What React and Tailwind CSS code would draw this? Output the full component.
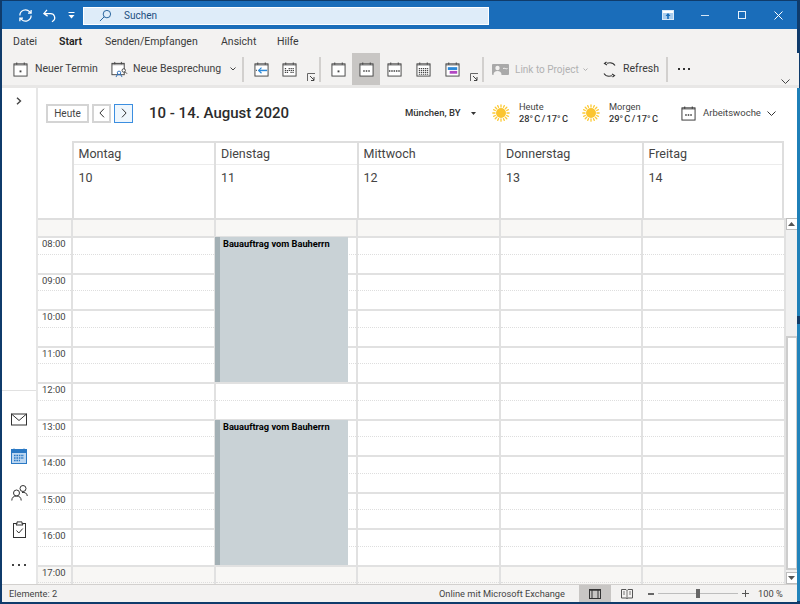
import React from "react";

const FONT = { fontFamily: 'Roboto,"Noto Sans",sans-serif' };

function Cal({ v = "dot", size = 15, color = "#444" }) {
  return (
    <svg width={size} height={size} viewBox="0 0 16 16" fill="none" className="shrink-0">
      <rect x="1" y="2" width="14" height="13" fill="#fff" stroke={color} strokeWidth="1" />
      <rect x="1" y="2" width="14" height="2" fill={color} fillOpacity="0.45" />
      <path d="M4 .5V3M12 .5V3" stroke={color} strokeWidth="1" />
      {v === "dot" && <rect x="7" y="9" width="2" height="2" fill={color} />}
      {v === "three" && <path d="M4.500 9.500h7" stroke={color} strokeWidth="1.600" strokeDasharray="1.600 1.100" />}
      {v === "five" && <path d="M2 9.500h12" stroke={color} strokeWidth="1.600" strokeDasharray="1.600 .9" />}
      {v === "month" && <path d="M3 7h10M3 9h10M3 11h10M3 13h10" stroke={color} strokeWidth="1.200" strokeDasharray="1.400 .8" />}
      {v === "back" && (
        <>
          <path d="M5 9h9" stroke="#2b88d8" strokeWidth="1.600" />
          <path d="M8 6 5 9l3 3" stroke="#2b88d8" strokeWidth="1.300" />
          <path d="M2 9h1" stroke={color} strokeWidth="1.400" />
        </>
      )}
      {v === "week" && (
        <>
          <path d="M3 7h2M7 7h6M3 9h10M3 11h4" stroke={color} strokeWidth="1.200" strokeDasharray="1.400 .7" />
          <path d="M9 11h4" stroke={color} strokeWidth="1.200" strokeDasharray="1.400 .7" />
        </>
      )}
      {v === "color" && (
        <>
          <rect x="3" y="5.500" width="10" height="3" fill="#2b88d8" />
          <rect x="5" y="9.500" width="8" height="3" fill="#b146c2" />
        </>
      )}
    </svg>
  );
}

function Launcher() {
  return (
    <svg width="9" height="9" viewBox="0 0 9 9" fill="none" className="shrink-0">
      <path d="M.5 8V.5H8" stroke="#666" />
      <path d="M3 3l4 4M7 4v3.500H4" stroke="#444" />
    </svg>
  );
}

function Sep() {
  return <div className="w-[2px] h-[25px] bg-[#d2d0ce] shrink-0" />;
}

function Sun() {
  return (
    <svg width="18" height="18" viewBox="0 0 18 18" className="shrink-0">
      <circle cx="9" cy="9" r="5" fill="#fbc531" />
      <g stroke="#fcc934" strokeWidth="1.300" strokeLinecap="round">
        <path d="M9 .8v2.200M9 15v2.200M.8 9H3M15 9h2.200M3.200 3.200l1.500 1.500M13.300 13.300l1.500 1.500M14.800 3.200l-1.500 1.500M4.700 13.300l-1.500 1.500" />
        <path d="M5.700 1.600l.8 1.700M11.500 14.700l.8 1.700M12.300 1.600l-.8 1.700M6.500 14.700l-.8 1.700M1.600 5.700l1.700.8M14.700 11.500l1.700.8M16.400 5.700l-1.700.8M3.300 11.500l-1.700.8" />
      </g>
    </svg>
  );
}

const hours = ["08:00", "09:00", "10:00", "11:00", "12:00", "13:00", "14:00", "15:00", "16:00", "17:00"];
const GRID = "grid grid-cols-[35px_repeat(5,142.5px)]";

function Event({ top }) {
  return (
    <div className={`absolute left-[177px] w-[133px] h-[145px] bg-[#c9d2d6] flex ${top}`}>
      <div className="w-[5px] bg-[#a3b0b5]" />
      <div className="pl-[3px] pt-[1px] text-[9.25px] leading-[12px] font-bold text-black whitespace-nowrap">Bauauftrag vom Bauherrn</div>
    </div>
  );
}

function HourRow({ label }) {
  const off = label === "17:00";
  const bg = off ? "bg-[#f8f7f5]" : "";
  return (
    <div className={`${GRID} h-[36.5px]`}>
      <div className={`border-t-2 border-[#e1e1e1] border-r-2 border-r-[#e1e1e1] ${bg}`}>
        <div className="h-[16.5px] border-b border-dotted border-[#dedede] pl-[4px] text-[9.5px] leading-[12px] text-[#444]">
          {label}
        </div>
      </div>
      {[0, 1, 2, 3, 4].map((i) => (
        <div key={i} className={`border-t-2 border-[#e1e1e1] border-r-2 border-r-[#e1e1e1] ${bg}`}>
          <div className="h-[16.5px] border-b border-dotted border-[#dedede]" />
        </div>
      ))}
    </div>
  );
}

export default function App() {
  return (
    <div style={FONT} className="w-[800px] h-[604px] bg-[#0f3b6b] flex overflow-hidden text-[#333]">
      <div className="w-[797px] h-[601px] ml-[2px] mt-px flex flex-col shrink-0">
        {/* Title bar */}
        <div className="h-[28px] bg-[#1a6dba] flex items-center text-white shrink-0">
          <svg width="15" height="15" viewBox="0 0 24 24" fill="none" stroke="#fff" strokeWidth="2" className="ml-[16px] mt-[1px]">
            <path d="M3 12a9 9 0 0 1 15.500-6.200L21 8M21 3v5h-5M21 12a9 9 0 0 1-15.500 6.200L3 16M3 21v-5h5" />
          </svg>
          <svg width="15" height="15" viewBox="0 0 24 24" fill="none" stroke="#fff" strokeWidth="2" className="ml-[9px] mt-[1px]">
            <path d="M8 3 3 9l6 4M3 9h11a6.500 6.500 0 0 1 4 11.500l-2 1.500" />
          </svg>
          <svg width="7" height="7" viewBox="0 0 7 7" className="ml-[11px] mt-[1px]" fill="#fff">
            <rect x="0.5" y="0" width="6" height="1" />
            <path d="M.5 3h6L3.500 6.500z" />
          </svg>
          <div className="ml-[8px] mt-[1px] w-[406px] h-[18px] bg-[#deecf9] border border-white flex items-center text-[#1b4e7e]">
            <svg width="13" height="13" viewBox="0 0 14 14" fill="none" stroke="#1a5a96" strokeWidth="1" className="ml-[15px]">
              <circle cx="8.500" cy="5.500" r="4" />
              <path d="M5.500 8.500 1 13" />
            </svg>
            <span className="ml-[12px] text-[10px]">Suchen</span>
          </div>
          <svg width="12" height="10" viewBox="0 0 12 10" className="ml-[173px]">
            <rect width="11" height="9" x=".5" y=".5" fill="#a9cdee" stroke="#dcebf9" />
            <rect x="1" y="1" width="10" height="2" fill="#fff" />
            <path d="M6 3 3.500 6h1.700v3h1.600V6h1.700z" fill="#1a6dba" />
          </svg>
          <div className="ml-[27px] w-[8px] h-px bg-[#d6e6f5]" />
          <div className="ml-[29px] w-[8px] h-[8px] border border-[#e5f0fa]" />
          <svg width="9" height="9" viewBox="0 0 9 9" stroke="#fff" strokeWidth="1" className="ml-[28px]">
            <path d="M.5.5l8 8M8.500.5l-8 8" />
          </svg>
        </div>

        {/* Ribbon tabs */}
        <div className="h-[24px] bg-[#f3f2f1] flex items-start pt-[6px] text-[10.5px] leading-[14px] text-[#3a3a3a] shrink-0">
          <span className="ml-[11px] w-[24px]">Datei</span>
          <span className="ml-[21px] w-[26px] font-semibold text-[#222] border-b-2 border-[#1a6dba] h-[20px] px-px">Start</span>
          <span className="ml-[21px] w-[96px] whitespace-nowrap">Senden/Empfangen</span>
          <span className="ml-[20px] w-[36px]">Ansicht</span>
          <span className="ml-[20px]">Hilfe</span>
        </div>

        {/* Ribbon toolbar */}
        <div className="h-[35px] bg-[#f3f2f1] flex items-center text-[10.5px] text-[#3f3f3f] border-b-[3px] border-[#e8e7e6] shrink-0 relative">
          <div className="ml-[11px]"><Cal v="dot" /></div>
          <span className="ml-[7px] w-[62px] whitespace-nowrap">Neuer Termin</span>
          <svg width="17" height="17" viewBox="0 0 18 17" fill="none" className="ml-[14px] shrink-0">
            <rect x="1" y="2" width="13" height="12" fill="#fff" stroke="#444" />
            <rect x="1" y="2" width="13" height="2" fill="#444" fillOpacity=".45" />
            <path d="M4 .5V3M11 .5V3" stroke="#444" />
            <circle cx="8.500" cy="12" r="1.800" stroke="#2b6cb8" fill="#fff" />
            <path d="M5.500 16.500c0-2 1.300-2.600 3-2.600s3 .6 3 2.600" stroke="#2b6cb8" />
            <circle cx="13.500" cy="9.500" r="1.800" stroke="#444" fill="#fff" />
            <path d="M15 11l2 2" stroke="#444" />
          </svg>
          <span className="ml-[5px] w-[87px] whitespace-nowrap">Neue Besprechung</span>
          <svg width="6" height="4" viewBox="0 0 6 4" fill="none" stroke="#444" className="ml-[10px] shrink-0"><path d="M.5.5 3 3 5.500.5" /></svg>
          <div className="ml-[6px]"><Sep /></div>
          <div className="ml-[10px]"><Cal v="back" /></div>
          <div className="ml-[13px]"><Cal v="week" /></div>
          <div className="ml-[10px] mt-[16px]"><Launcher /></div>
          <div className="ml-[3px]"><Sep /></div>
          <div className="ml-[10px]"><Cal v="dot" /></div>
          <div className="ml-[6px] w-[28px] h-[32px] bg-[#c8c6c4] flex items-center justify-center shrink-0"><Cal v="three" /></div>
          <div className="ml-[7px]"><Cal v="five" /></div>
          <div className="ml-[14px]"><Cal v="month" /></div>
          <div className="ml-[14px]"><Cal v="color" /></div>
          <div className="ml-[10px] mt-[16px]"><Launcher /></div>
          <div className="ml-[3px]"><Sep /></div>
          <svg width="17" height="11" viewBox="0 0 17 11" className="ml-[8px] shrink-0">
            <rect width="17" height="11" rx="1" fill="#a9a9a9" />
            <circle cx="5.500" cy="4" r="2.200" fill="#f3f2f1" />
            <path d="M1.500 11c0-3 1.600-4 4-4s4 1 4 4z" fill="#f3f2f1" />
            <path d="M11 4.500c1.500-1 3 1 4.500 0" stroke="#f3f2f1" fill="none" />
          </svg>
          <span className="ml-[6px] w-[66px] whitespace-nowrap text-[10px] text-[#b1b1b1]">Link to Project</span>
          <svg width="5" height="3" viewBox="0 0 5 3" fill="none" stroke="#b1b1b1" className="ml-[2px] shrink-0"><path d="M.5.5 2.500 2.500 4.500.5" /></svg>
          <svg width="15" height="17" viewBox="0 0 15 17" fill="none" stroke="#333" strokeWidth="1.100" className="ml-[14px] shrink-0">
            <path d="M13 4.500C11.500 2 8.500 1.200 5 2.200M4.500 1l-2 1.500L5 4" />
            <path d="M2 12.500C3.500 15 6.500 15.800 10 14.800M10.500 16l2-1.500L10 13" />
          </svg>
          <span className="ml-[6px] w-[36px] text-[#3a3a3a]">Refresh</span>
          <div className="ml-[7px]"><Sep /></div>
          <div className="ml-[10px] flex gap-[3px]">
            <span className="w-[2px] h-[2px] bg-[#333]" />
            <span className="w-[2px] h-[2px] bg-[#333]" />
            <span className="w-[2px] h-[2px] bg-[#333]" />
          </div>
          <svg width="9" height="5" viewBox="0 0 9 5" fill="none" stroke="#444" className="absolute right-[9px] bottom-[1px]"><path d="M.5.5l4 4 4-4" /></svg>
        </div>

        {/* Body */}
        <div className="flex-1 flex bg-white min-h-0">
          {/* Sidebar */}
          <div className="w-[36px] shrink-0 flex flex-col border-r-2 border-[#e6e6e6]">
            <div className="h-[303px] flex items-start justify-center pt-[9px] border-b border-[#e1e1e1] shrink-0">
              <svg width="6" height="8" viewBox="0 0 6 8" fill="none" stroke="#444" strokeWidth="1.400"><path d="M1 .7 4.500 4 1 7.300" /></svg>
            </div>
            <div className="flex-1 flex flex-col items-center pt-[22px]">
              <svg width="16" height="12" viewBox="0 0 16 12" fill="none" stroke="#333" className="h-[13px]">
                <rect x=".5" y=".5" width="15" height="11" fill="#fff" />
                <path d="M.5.5 8 7l7.500-6.500" />
              </svg>
              <svg width="16" height="16" viewBox="0 0 16 16" className="mt-[22px]">
                <rect x=".5" y="1.500" width="15" height="14" fill="#bcd7f2" stroke="#2b79c4" />
                <rect x="1" y="2" width="14" height="3" fill="#2b79c4" />
                <path d="M3 .5v2M13 .5v2" stroke="#2b79c4" />
                <path d="M3 7.500h10M3 10h10M3 12.500h6" stroke="#2b79c4" strokeWidth="1.300" strokeDasharray="1.600 .8" />
              </svg>
              <svg width="17" height="16" viewBox="0 0 17 16" fill="none" stroke="#333" className="mt-[21px]">
                <circle cx="5.500" cy="8" r="3" fill="#fff" />
                <path d="M.8 15.500c0-3 1.800-4.500 4.700-4.500s4.700 1.500 4.700 4.500" />
                <circle cx="12" cy="3.500" r="3" fill="#fff" />
                <path d="M11 7.500c2.800-.5 5 .6 5.300 3.500" />
              </svg>
              <svg width="13" height="17" viewBox="0 0 13 17" fill="none" stroke="#333" className="mt-[20px]">
                <rect x=".5" y="2.500" width="12" height="14" />
                <path d="M4 2.500V.9h5v1.600l1 1.500H3z" fill="#fff" />
                <path d="M3.500 9.500l2.300 2.500 4-4.500" />
              </svg>
              <div className="mt-[26px] flex gap-[4px]">
                <span className="w-[2px] h-[2px] bg-[#444]" />
                <span className="w-[2px] h-[2px] bg-[#444]" />
                <span className="w-[2px] h-[2px] bg-[#444]" />
              </div>
            </div>
          </div>

          {/* Calendar */}
          <div className="flex-1 min-w-0 flex flex-col">
            {/* Header */}
            <div className="h-[53px] flex items-center shrink-0 pb-[3px] pl-[8px]">
              <button className="w-[43px] h-[19px] border-2 border-[#d4d4d4] text-[10px] text-[#444]">Heute</button>
              <button className="ml-[3px] w-[19px] h-[19px] border-2 border-[#d4d4d4] flex items-center justify-center">
                <svg width="6" height="10" viewBox="0 0 6 10" fill="none" stroke="#333"><path d="M5 .7.9 5 5 9.300" /></svg>
              </button>
              <button className="ml-[3px] w-[19px] h-[19px] border border-[#3b8ee0] bg-[#eef6fd] flex items-center justify-center">
                <svg width="6" height="10" viewBox="0 0 6 10" fill="none" stroke="#333"><path d="M1 .7 5.100 5 1 9.300" /></svg>
              </button>
              <span className="ml-[16px] text-[15px] font-medium text-[#2b2b2b] w-[256px] shrink-0">10 - 14. August 2020</span>
              <span className="text-[9.5px] font-medium text-[#333] w-[66px] shrink-0">München, BY</span>
              <svg width="5" height="3" viewBox="0 0 5 3" fill="#333" className="shrink-0"><path d="M0 0h5L2.500 3z" /></svg>
              <div className="ml-[16px]"><Sun /></div>
              <div className="ml-[9px] w-[63px] shrink-0 text-[9.25px] leading-[12px]">
                <div className="text-[#444]">Heute</div>
                <div className="font-medium [word-spacing:-1px]">28° C / 17° C</div>
              </div>
              <Sun />
              <div className="ml-[9px] w-[72px] shrink-0 text-[9.25px] leading-[12px]">
                <div className="text-[#444]">Morgen</div>
                <div className="font-medium [word-spacing:-1px]">29° C / 17° C</div>
              </div>
              <Cal v="three" size={15} color="#333" />
              <span className="ml-[7px] text-[9.5px] text-[#444] w-[64px] shrink-0 whitespace-nowrap">Arbeitswoche</span>
              <svg width="9" height="5" viewBox="0 0 9 5" fill="none" stroke="#333" className="shrink-0"><path d="M.5.5l4 4 4-4" /></svg>
            </div>

            {/* Day heads */}
            <div className="grid grid-cols-[33.5px_repeat(5,142.5px)] shrink-0">
              <div />
              {["Montag", "Dienstag", "Mittwoch", "Donnerstag", "Freitag"].map((d, i) => (
                <div key={d} className={`border-t-2 border-l-2 border-[#dedede] ${i === 4 ? "border-r-2" : ""}`}>
                  <div className="h-[22px] pl-[5px] text-[12.500px] leading-[22px] text-[#444] border-b border-[#ececec]">{d}</div>
                  <div className="h-[54px] pl-[5px] pt-[4px] text-[12.500px] leading-[18px] text-[#444]">{10 + i}</div>
                </div>
              ))}
            </div>

            {/* Scrollable region */}
            <div className="flex-1 flex min-h-0 -mt-px">
              <div className="w-[747.5px] shrink-0 flex flex-col overflow-hidden">
                <div className={`${GRID} h-[18px] shrink-0 bg-[#f8f7f5] border-t-2 border-[#dedede]`}>
                  {[0, 1, 2, 3, 4, 5].map((i) => (
                    <div key={i} className="border-r-2 border-[#e1e1e1]" />
                  ))}
                </div>
                <div className="relative">
                  {hours.map((h) => (
                    <HourRow key={h} label={h} />
                  ))}
                  <Event top="top-[1px]" />
                  <Event top="top-[183.500px]" />
                </div>
              </div>
              {/* Scrollbar */}
              <div className="w-[12px] flex flex-col bg-[#f0f0f0] shrink-0">
                <div className="h-[12px] border border-[#bdbdbd] bg-white flex items-center justify-center shrink-0">
                  <svg width="7" height="4" viewBox="0 0 7 4" fill="#555"><path d="M3.500 0 7 4H0z" /></svg>
                </div>
                <div className="h-[106px] shrink-0" />
                <div className="h-[234px] border-2 border-[#cdcdcd] bg-white shrink-0" />
                <div className="flex-1" />
                <div className="h-[12px] border border-[#bdbdbd] bg-white flex items-center justify-center shrink-0">
                  <svg width="7" height="4" viewBox="0 0 7 4" fill="#555"><path d="M3.500 4 7 0H0z" /></svg>
                </div>
              </div>
            </div>
          </div>
        </div>

        {/* Status bar */}
        <div className="h-[18px] bg-[#f3f2f1] border-t border-[#d2d0ce] flex items-center text-[9.25px] text-[#444] shrink-0">
          <span className="ml-[7px] w-[55px] shrink-0">Elemente: 2</span>
          <span className="ml-[375px] w-[140px] shrink-0 whitespace-nowrap">Online mit Microsoft Exchange</span>
          <div className="w-[32px] h-[17px] bg-[#c8c6c4] flex items-center justify-center shrink-0">
            <svg width="12" height="10" viewBox="0 0 12 10" fill="none" stroke="#333"><rect x=".5" y=".5" width="11" height="9" /><path d="M3 .5v9M9 .5v9" /><path d="M.5 1h11" strokeWidth="1.500" /></svg>
          </div>
          <svg width="12" height="10" viewBox="0 0 12 10" fill="none" stroke="#555" className="ml-[10px] shrink-0"><path d="M.5.5h4.500L6 1.500 7 .5h4.500v8.500H7L6 9.500 5 9H.5z" /><path d="M6 1.500V9.500M2 3h2M2 5h2M8 3h2M8 5h2" strokeWidth=".8" /></svg>
          <div className="ml-[15px] w-[6px] h-[2px] bg-[#666] shrink-0" />
          <div className="ml-[4px] w-[80px] h-px bg-[#bdbdbd] relative shrink-0">
            <div className="absolute left-[38px] -top-[4px] w-[4px] h-[9px] bg-[#666]" />
          </div>
          <svg width="7" height="7" viewBox="0 0 7 7" stroke="#555" className="ml-[4px] shrink-0"><path d="M0 3.500h7M3.500 0v7" /></svg>
          <span className="ml-[9px]">100 %</span>
        </div>
      </div>

      {/* Right edge of the window: desktop behind it */}
      <div className="w-[3px] flex flex-col shrink-0 -ml-[2px]">
        <div className="h-[88px] bg-[#0f3b6b]" />
        <div className="h-[228px] bg-[#1f80b8]" />
        <div className="h-[8px] bg-[#123a66]" />
        <div className="flex-1 bg-[#2384bb]" />
        <div className="h-[3px] bg-[#0f3b6b]" />
      </div>
    </div>
  );
}
